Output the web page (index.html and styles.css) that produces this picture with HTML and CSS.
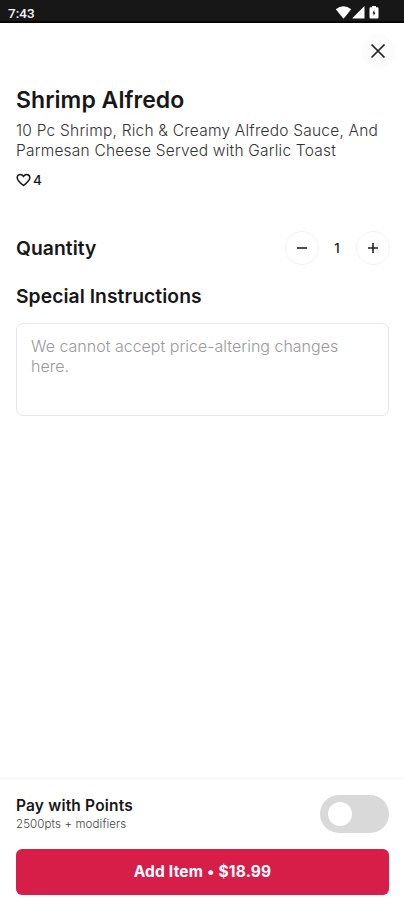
FILE: index.html
```html
<!DOCTYPE html>
<html lang="en">
<head>
<meta charset="utf-8">
<title>Shrimp Alfredo</title>
<link rel="stylesheet" href="styles.css">
</head>
<body>
<div class="status">
  <span class="time">7:43</span>
  <svg class="status-icons" width="46" height="16" viewBox="0 0 46 16">
    <path d="M.8 4.200Q8.500-1.600 16.200 4.200L8.500 13.800Z"/>
    <path d="M17.500 13.500V13L29.500 1V13.500Z"/>
    <path d="M35.500 2.200H37V1h4v1.200h1.500q1 0 1 1v9.300q0 1-1 1h-7q-1 0-1-1v-9.300q0-1 1-1Z"/>
    <path class="bolt" d="M39.300 4.800 37.500 8.400h1.100v2.700l1.900-3.600h-1.200Z"/>
  </svg>
</div>
<main class="content">
  <div class="close-row">
    <button class="close" aria-label="Close"><svg width="16" height="16" viewBox="0 0 16 16"><path d="M1.500 1.500l13 13M14.500 1.500l-13 13"/></svg></button>
  </div>
  <h1 class="title">Shrimp Alfredo</h1>
  <p class="desc">10 Pc Shrimp, Rich &amp; Creamy Alfredo Sauce, And<br>Parmesan Cheese Served with Garlic Toast</p>
  <div class="likes">
    <svg width="15" height="14" viewBox="0 0 15 14"><path d="M7.500 12.500C4.500 10.200 1.200 7.600 1.200 4.700 1.200 2.800 2.600 1.400 4.300 1.400c1.300 0 2.500.7 3.200 1.900.7-1.200 1.900-1.900 3.200-1.900 1.700 0 3.100 1.400 3.100 3.300 0 2.900-3.300 5.500-6.300 7.800Z"/></svg>
    <span>4</span>
  </div>
  <div class="quantity">
    <h2>Quantity</h2>
    <div class="stepper">
      <button class="step" aria-label="Decrease"><svg width="12" height="12" viewBox="0 0 12 12"><path d="M1 6h10"/></svg></button>
      <span class="count">1</span>
      <button class="step" aria-label="Increase"><svg width="12" height="12" viewBox="0 0 12 12"><path d="M1 6h10M6 1v10"/></svg></button>
    </div>
  </div>
  <h2 class="instructions">Special Instructions</h2>
  <div class="note" contenteditable="true">We cannot accept price-altering changes here.</div>
</main>
<footer class="footer">
  <div class="points">
    <div>
      <div class="points-title">Pay with Points</div>
      <div class="points-sub">2500pts + modifiers</div>
    </div>
    <div class="toggle"><span class="knob"></span></div>
  </div>
  <button class="add"><span>Add Item • $18.99</span></button>
</footer>
</body>
</html>
```
FILE: styles.css
```css
* { box-sizing: border-box; }
body {
  margin: 0;
  height: 900px;
  display: flex;
  flex-direction: column;
  overflow: hidden;
  background: #fff;
  color: #171717;
  font-family: Inter, "Liberation Sans", sans-serif;
}
h1, h2, p { margin: 0; font-weight: 600; }
button { padding: 0; border: 0; font: inherit; display: flex; align-items: center; justify-content: center; }
svg { display: block; fill: none; }
.status {
  height: 23px;
  flex: none;
  display: flex;
  justify-content: space-between;
  padding: 4px 23px 0 8px;
  background: #171717;
  border-bottom: 2px solid #050505;
  color: #f4f4f4;
}
.time { font: 500 13.500px/18px Roboto, sans-serif; }
.status-icons { fill: #fff; margin-top: 1px; }
.bolt { fill: #171717; }
.content { flex: 1; padding: 11px 15px 0 16px; }
.close-row { display: flex; justify-content: flex-end; margin-right: -6px; }
.close { width: 34px; height: 34px; border-radius: 50%; background: #fcfcfc; }
.close svg { stroke: #222; stroke-width: 1.700; }
.title { margin-top: 18px; font-size: 23px; line-height: 28px; letter-spacing: .05px; }
.desc { margin-top: 7px; font-size: 15.500px; font-weight: 300; line-height: 20px; letter-spacing: .22px; color: #333; white-space: nowrap; }
.likes { display: flex; align-items: center; gap: 2px; margin-top: 10px; height: 18px; font-size: 13.500px; font-weight: 500; }
.likes svg { stroke: #171717; stroke-width: 1.500; }
.quantity { display: flex; justify-content: space-between; align-items: center; margin-top: 42px; height: 34px; }
h2 { font-size: 19.300px; line-height: 24px; letter-spacing: .06px; }
.stepper { display: flex; align-items: center; margin-right: -1px; }
.step { width: 34px; height: 34px; border: 1px solid #f3f3f3; border-radius: 50%; background: #fff; }
.step svg { stroke: #222; stroke-width: 1.600; }
.count { width: 37px; padding-right: 1px; text-align: center; font-size: 13px; font-weight: 500; }
.instructions { margin-top: 19px; }
.note {
  margin-top: 15px;
  height: 93px;
  padding: 13px 30px 0 14px;
  border: 1px solid #e6e6e6;
  border-radius: 7px;
  font-size: 16px;
  font-weight: 300;
  line-height: 19.500px;
  color: #999;
}
.footer { flex: none; height: 123px; padding: 15px 15px 0 16px; border-top: 3px solid #fafafa; }
.points { display: flex; justify-content: space-between; height: 38px; }
.points-title { padding-top: 1px; font-size: 15.500px; font-weight: 600; line-height: 20px; letter-spacing: .18px; }
.points-sub { font-size: 11.500px; font-weight: 300; line-height: 16px; letter-spacing: .12px; color: #444; }
.toggle { width: 69px; height: 38px; padding: 7px 8px; border-radius: 19px; background: #d9d9d9; }
.knob { display: block; width: 24px; height: 24px; border-radius: 50%; background: #fff; }
.add { width: 100%; height: 46px; margin-top: 16px; border-radius: 6px; background: #d71e49; color: #fff; font-size: 15.500px; font-weight: 700; letter-spacing: .2px; }
.add span { margin-top: -1px; }
```
